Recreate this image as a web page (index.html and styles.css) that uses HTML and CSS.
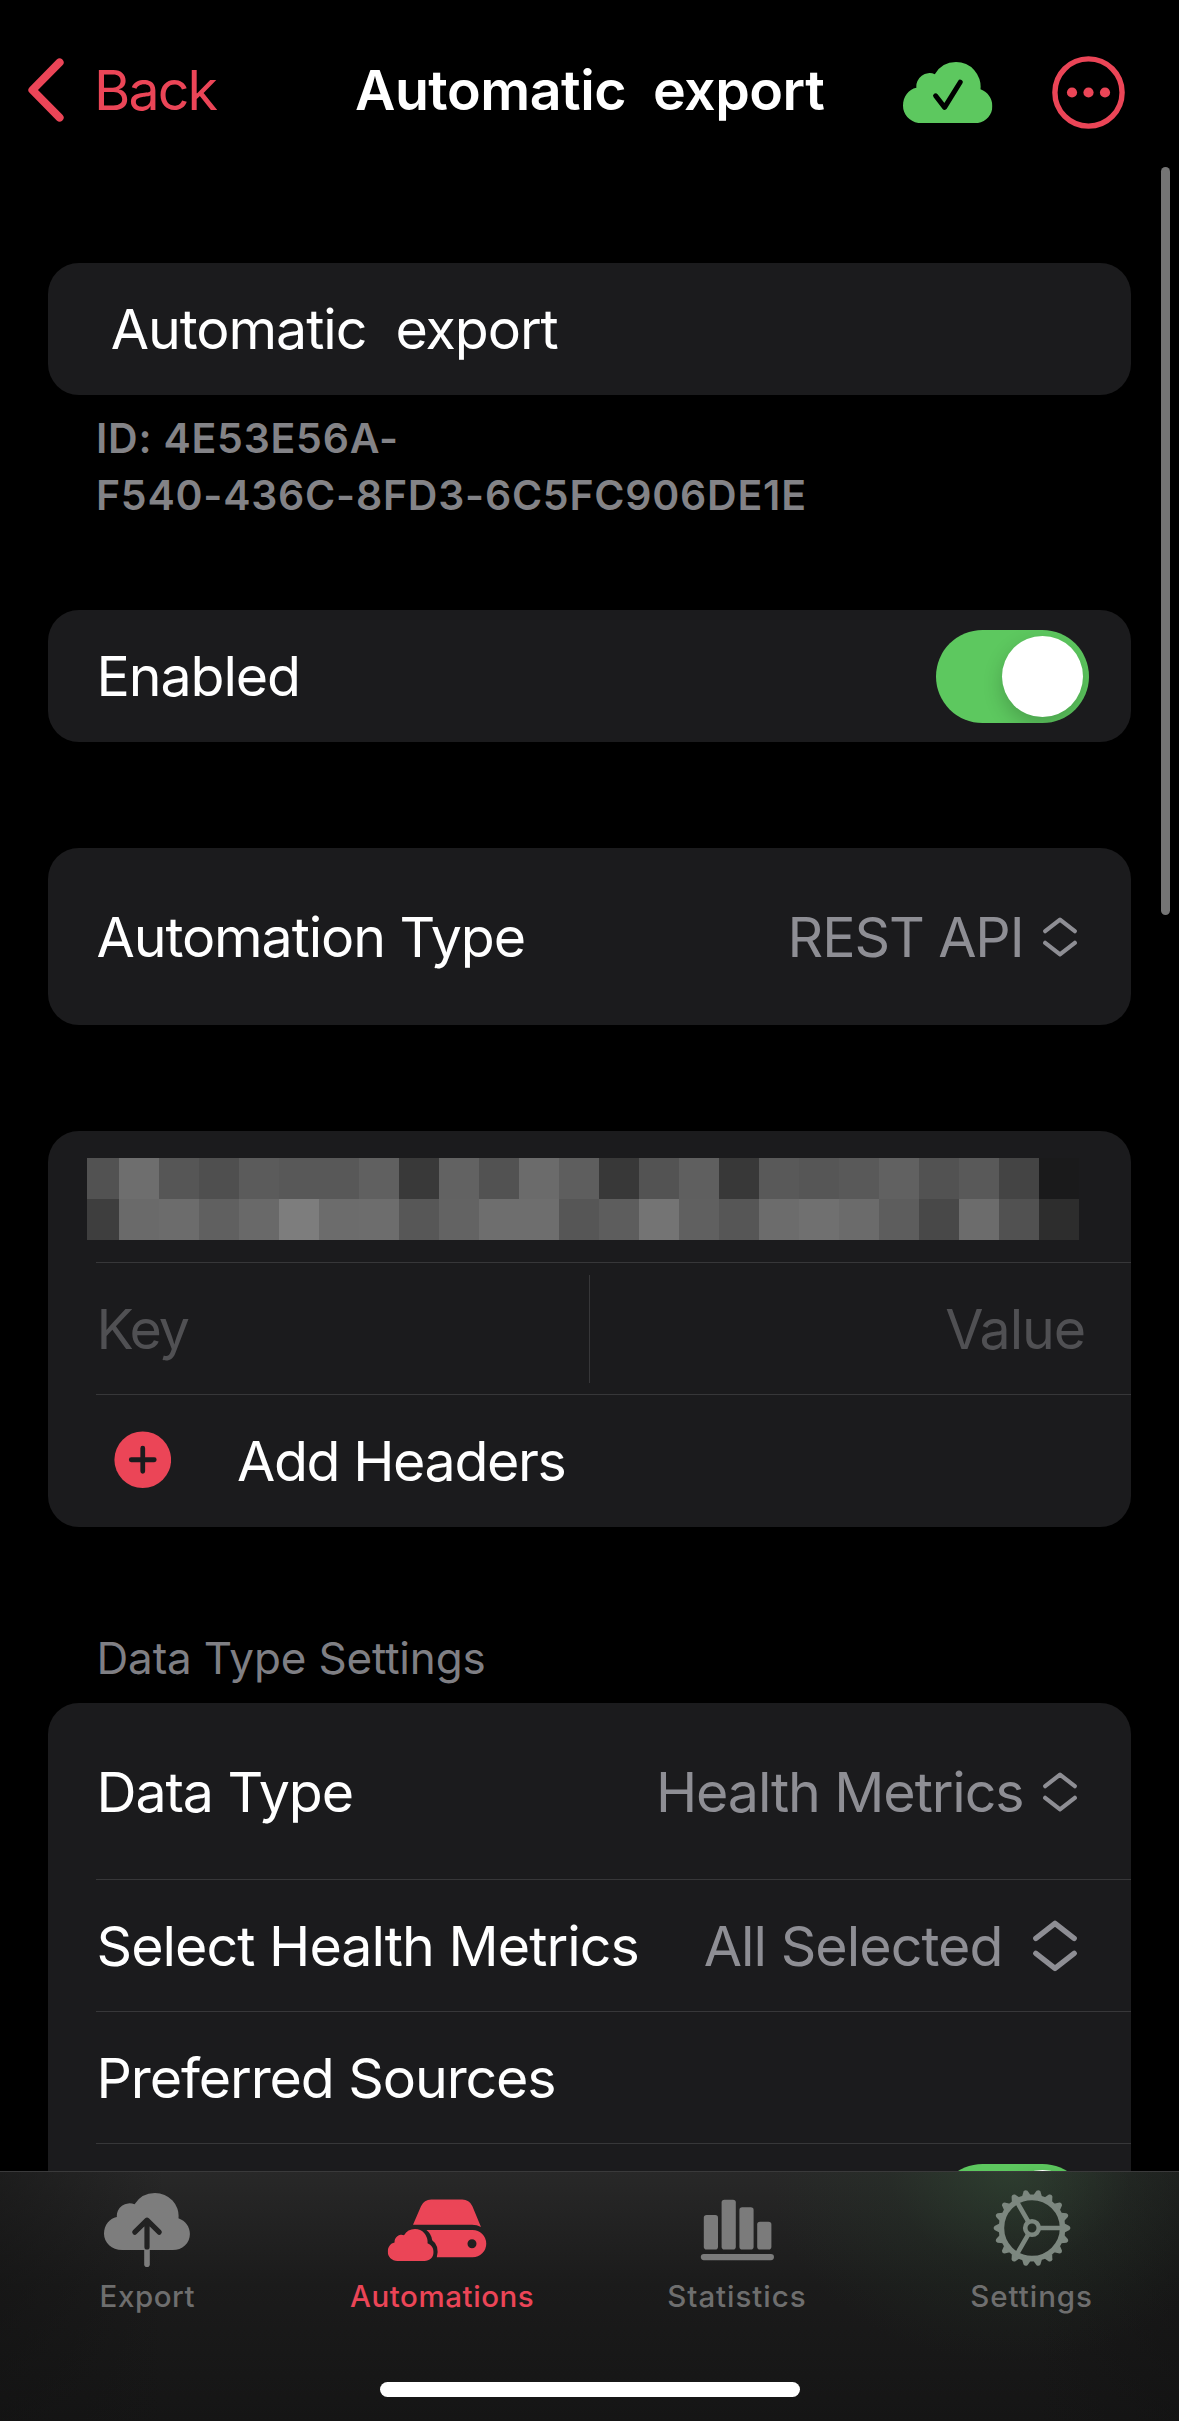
FILE: index.html
```html
<!DOCTYPE html>
<html lang="en">
<head>
<meta charset="utf-8">
<title>Automatic export</title>
<link rel="stylesheet" href="styles.css">
</head>
<body>
<svg class="defs" aria-hidden="true">
  <symbol id="cloud" viewBox="0 0 89.5 61.3" preserveAspectRatio="none">
    <path d="M19 61.3C8 61.3 0 53.5 0 43.8C0 34.5 5.5 27.2 13.4 25.7A13.2 13.2 0 0 1 31.8 12.2A24.6 24.6 0 0 1 53 0A24.6 24.6 0 0 1 77.5 27.2C85 30 89.4 36.6 89.4 44C89.4 54 81.5 61.3 71.5 61.3Z"/>
  </symbol>
  <symbol id="updown" viewBox="0 0 34 40">
    <path d="M2.2 14.2L17 2.6L31.8 14.2M2.2 25.8L17 37.4L31.8 25.8" fill="none" stroke="currentColor" stroke-width="4.2" stroke-linecap="round" stroke-linejoin="round"/>
  </symbol>
</svg>

<div class="screen">
  <header class="navbar">
    <a class="back">
      <svg class="back-icon" viewBox="0 0 36 64"><path d="M31.6 4.4L4.4 32L31.6 59.6" fill="none" stroke="currentColor" stroke-width="8" stroke-linecap="round" stroke-linejoin="round"/></svg>
      <span class="back-label">Back</span>
    </a>
    <h1 class="title">Automatic  export</h1>
    <div class="actions">
      <svg class="sync" viewBox="0 0 89.5 61.3"><use href="#cloud" width="89.5" height="61.3"/><path d="M32.6 33.8L41.6 45.4L57.2 20.2" fill="none" stroke="#000" stroke-width="5" stroke-linecap="round" stroke-linejoin="round"/></svg>
      <svg class="more" viewBox="0 0 73 73"><circle cx="36.5" cy="36.5" r="33.6" fill="none" stroke="currentColor" stroke-width="5.4"/><circle cx="20" cy="36.5" r="5.1" fill="currentColor"/><circle cx="36.5" cy="36.5" r="5.1" fill="currentColor"/><circle cx="53" cy="36.5" r="5.1" fill="currentColor"/></svg>
    </div>
  </header>

  <main class="form">
    <section class="card"><div class="row row-name">Automatic  export</div></section>
    <p class="footnote">ID: 4E53E56A-<br>F540-436C-8FD3-6C5FC906DE1E</p>

    <section class="card card-enabled">
      <div class="row row-toggle"><span>Enabled</span><span class="toggle"><i class="knob"></i></span></div>
    </section>

    <section class="card card-type">
      <div class="row tall"><span>Automation Type</span><span class="picker">REST API<svg class="updown"><use href="#updown"/></svg></span></div>
    </section>

    <section class="card card-headers">
      <div class="row row-url">
        <div class="mosaic">
          <i style="background:#525252"></i><i style="background:#6e6e6e"></i><i style="background:#565656"></i><i style="background:#4f4f4f"></i><i style="background:#5b5b5b"></i><i style="background:#585858"></i><i style="background:#585858"></i><i style="background:#606060"></i><i style="background:#393939"></i><i style="background:#626262"></i><i style="background:#525252"></i><i style="background:#6b6b6b"></i><i style="background:#5e5e5e"></i><i style="background:#383838"></i><i style="background:#535353"></i><i style="background:#5f5f5f"></i><i style="background:#383838"></i><i style="background:#595959"></i><i style="background:#565656"></i><i style="background:#595959"></i><i style="background:#616161"></i><i style="background:#525252"></i><i style="background:#595959"></i><i style="background:#444444"></i><i style="background:#1a1a1b"></i>
          <i style="background:#3e3e3e"></i><i style="background:#6a6a6a"></i><i style="background:#6c6c6c"></i><i style="background:#606060"></i><i style="background:#696969"></i><i style="background:#7d7d7d"></i><i style="background:#6c6c6c"></i><i style="background:#6d6d6d"></i><i style="background:#575757"></i><i style="background:#636363"></i><i style="background:#6e6e6e"></i><i style="background:#6e6e6e"></i><i style="background:#565656"></i><i style="background:#5d5d5d"></i><i style="background:#747474"></i><i style="background:#606060"></i><i style="background:#565656"></i><i style="background:#6c6c6c"></i><i style="background:#707070"></i><i style="background:#6b6b6b"></i><i style="background:#5d5d5d"></i><i style="background:#484848"></i><i style="background:#6c6c6c"></i><i style="background:#515151"></i><i style="background:#2d2d2d"></i>
        </div>
      </div>
      <div class="row row-pair"><span class="key">Key</span><span class="value">Value</span></div>
      <div class="row row-add">
        <svg class="plus" viewBox="0 0 58 58"><circle cx="29" cy="29" r="28.6" fill="#eb4557"/><path d="M29 17.4V40.6M17.4 29H40.6" stroke="#1b1b1d" stroke-width="4.8" stroke-linecap="round"/></svg>
        <span>Add Headers</span>
      </div>
    </section>

    <h2 class="section-title">Data Type Settings</h2>
    <section class="card card-data">
      <div class="row tall"><span>Data Type</span><span class="picker">Health Metrics<svg class="updown"><use href="#updown"/></svg></span></div>
      <div class="row row-metrics"><span>Select Health Metrics</span><span class="picker picker-wide">All Selected<svg class="updown updown-lg"><use href="#updown"/></svg></span></div>
      <div class="row">Preferred Sources</div>
      <div class="row row-toggle"><span></span><span class="toggle"><i class="knob"></i></span></div>
    </section>
  </main>

  <i class="scrollbar"></i>

  <footer class="tabbar">
    <nav class="tabs">
      <a class="tab">
        <svg class="tab-icon" viewBox="-60 0 120 84">
          <use href="#cloud" x="-43" y="4" width="86" height="57" fill="#7d7d7d"/>
          <path d="M0 60V75.2" stroke="#7d7d7d" stroke-width="5.6" stroke-linecap="round"/>
          <path d="M0 31.5V58M-12.2 43.2L0 31.2L12.2 43.2" fill="none" stroke="#222" stroke-width="5.2" stroke-linecap="round" stroke-linejoin="round"/>
        </svg>
        <span class="lbl-export">Export</span>
      </a>
      <a class="tab active">
        <svg class="tab-icon" viewBox="-60 0 120 84" fill="currentColor">
          <path d="M-29 35.7L-21 17.2Q-17.8 10.6 -10.8 10.6H20.2Q27.2 10.6 30.4 17.2L39 38Q35 35.7 30 35.7Z"/>
          <path fill-rule="evenodd" d="M-15.6 41H30.6A13.65 13.65 0 0 1 30.6 68.3H-5.2Q-2.2 56.5 -9.8 51.2Q-10.6 44.8 -15.6 41ZM30 50.2A4.5 4.5 0 1 0 30 59.2A4.5 4.5 0 1 0 30 50.2Z"/>
          <use href="#cloud" x="-54.3" y="40" width="46" height="32"/>
        </svg>
        <span class="lbl-auto">Automations</span>
      </a>
      <a class="tab">
        <svg class="tab-icon" viewBox="-60 0 120 84" fill="#7b7b7b">
          <rect x="-33.2" y="26" width="14.2" height="34.6" rx="2.8"/><rect x="-15.4" y="10.8" width="14.2" height="49.8" rx="2.8"/><rect x="2.4" y="18.2" width="14.2" height="42.4" rx="2.8"/><rect x="20.2" y="32.8" width="14.2" height="27.8" rx="2.8"/><rect x="-36.2" y="65" width="73.2" height="6.2" rx="3.1"/>
        </svg>
        <span class="lbl-stats">Statistics</span>
      </a>
      <a class="tab">
        <svg class="tab-icon" viewBox="-60 0 120 84">
          <g transform="translate(0 39)" fill="#7c877f" stroke="#7c877f">
            <g stroke="none">
              <path id="t" d="M-4.4 -32.6L-2 -37.4Q0 -39.4 2 -37.4L4.4 -32.6Z" transform="rotate(90)"/>
              <use href="#t" transform="rotate(20)"/><use href="#t" transform="rotate(40)"/><use href="#t" transform="rotate(60)"/><use href="#t" transform="rotate(80)"/><use href="#t" transform="rotate(100)"/><use href="#t" transform="rotate(120)"/><use href="#t" transform="rotate(140)"/><use href="#t" transform="rotate(160)"/><use href="#t" transform="rotate(180)"/><use href="#t" transform="rotate(200)"/><use href="#t" transform="rotate(220)"/><use href="#t" transform="rotate(240)"/><use href="#t" transform="rotate(260)"/><use href="#t" transform="rotate(280)"/><use href="#t" transform="rotate(300)"/><use href="#t" transform="rotate(320)"/><use href="#t" transform="rotate(340)"/>
            </g>
            <circle r="30.6" fill="none" stroke-width="5.6"/>
            <circle r="6.8" fill="none" stroke-width="4.6"/>
            <path d="M8 0H29M-4 -6.9L-14.5 -25.1M-4 6.9L-14.5 25.1" fill="none" stroke-width="4.6"/>
          </g>
        </svg>
        <span class="lbl-settings">Settings</span>
      </a>
    </nav>
    <i class="home"></i>
  </footer>
</div>
</body>
</html>
```
FILE: styles.css
```css
* { box-sizing: border-box; margin: 0; padding: 0; }

body {
  background: #000;
  color: #fff;
  font-family: Inter, "Liberation Sans", sans-serif;
  font-size: 55.5px;
  letter-spacing: -1.1px;
  line-height: 66px;
}

.defs { position: absolute; width: 0; height: 0; }

.screen {
  position: relative;
  height: 2421px;
  overflow: hidden;
}

/* Navigation bar */
.navbar {
  display: grid;
  grid-template-columns: 355px auto 1fr;
  align-items: center;
  height: 180px;
  padding: 0 54px 0 0;
}

.back {
  display: flex;
  align-items: center;
  gap: 30px;
  padding-left: 28px;
  color: #eb4557;
}
.back-icon { width: 36px; height: 64px; }
.back-label { letter-spacing: -1.9px; }

.title {
  font-size: 55.5px;
  font-weight: 600;
  letter-spacing: -0.5px;
  white-space: pre;
}

.actions {
  display: flex;
  justify-content: flex-end;
  align-items: center;
  gap: 59.5px;
  padding-top: 5px;
}
.sync { width: 89.5px; height: 61.3px; fill: #5dc85f; }
.more { width: 73px; height: 73px; color: #eb4557; }

/* Grouped form */
.form { padding: 83px 48px 0; }

.card {
  background: #1b1b1d;
  border-radius: 31px;
}
.card-enabled { margin-top: 86px; }
.card-type { margin-top: 106px; }
.card-headers { margin-top: 106px; }

.row {
  position: relative;
  display: flex;
  align-items: center;
  justify-content: space-between;
  height: 132px;
  padding: 0 54.5px 0 48.5px;
  white-space: pre;
}
.tall { height: 177px; }
.row + .row::before {
  content: "";
  position: absolute;
  top: -1px;
  left: 48px;
  right: 0;
  height: 1px;
  background: #373739;
}
.row-name { padding-left: 62.7px; letter-spacing: -1.05px; }
.row-toggle { padding-right: 42px; }
.row-metrics { letter-spacing: -0.95px; }

.footnote {
  height: 129px;
  padding: 15px 0 0 48px;
  color: #838387;
  font-size: 41px;
  font-weight: 600;
  letter-spacing: 0.77px;
  line-height: 57px;
}

.toggle {
  display: flex;
  justify-content: flex-end;
  width: 153px;
  height: 93px;
  padding: 6px;
  border-radius: 47px;
  background: #5dc85f;
  overflow: hidden;
}
.knob {
  width: 81px;
  height: 81px;
  border-radius: 50%;
  background: #fff;
  box-shadow: 0 8px 20px rgba(0, 0, 0, 0.2);
}

.picker {
  display: flex;
  align-items: center;
  gap: 19px;
  color: #8e8e94;
}
.picker-wide { gap: 30px; }
.updown { width: 34px; height: 40px; }
.updown-lg { width: 44px; height: 51.8px; }

.row-url { padding: 0 0 0 39px; align-items: flex-start; }
.mosaic {
  display: grid;
  grid-template-columns: 32px repeat(24, 40px);
  grid-auto-rows: 41px;
  margin-top: 27px;
}

.row-pair { padding-right: 46px; color: #505053; }
.row-pair .key {
  display: flex;
  align-items: center;
  width: 493.5px;
  height: 108px;
  border-right: 1px solid #373739;
  letter-spacing: -2px;
}

.row-add { justify-content: flex-start; gap: 66px; padding-left: 65.5px; letter-spacing: -1.4px; }
.plus { width: 57.5px; height: 57.5px; margin-bottom: 2px; }

.section-title {
  margin-top: 105px;
  padding-left: 48.5px;
  height: 71px;
  color: #7f7f84;
  font-size: 44px;
  font-weight: 400;
  letter-spacing: -0.16px;
  line-height: 53px;
}
.card-data { border-radius: 31px 31px 0 0; }

.scrollbar {
  position: absolute;
  top: 167px;
  right: 9px;
  width: 9px;
  height: 748px;
  border-radius: 4.5px;
  background: #757575;
}

/* Tab bar, laid over the scrolled form */
.tabbar {
  position: absolute;
  left: 0;
  right: 0;
  bottom: 0;
  height: 250px;
  border-top: 1px solid #3a3a3b;
  background:
    radial-gradient(ellipse 240px 190px at 1010px 0, rgba(52, 86, 56, 0.45), rgba(40, 66, 44, 0.18) 50%, rgba(30, 50, 32, 0) 100%),
    linear-gradient(90deg, rgba(18, 18, 18, 0.5), rgba(18, 18, 18, 0) 14%, rgba(18, 18, 18, 0) 88%, rgba(18, 18, 18, 0.5)),
    linear-gradient(#282828, #1b1b1b 45%, #151515);
  display: flex;
  flex-direction: column;
  align-items: center;
}
.tabs {
  display: grid;
  grid-template-columns: repeat(4, 1fr);
  width: 100%;
  height: 210px;
  padding-top: 17px;
}
.tab {
  display: flex;
  flex-direction: column;
  align-items: center;
  gap: 5px;
  color: #6e6e6e;
  font-size: 29.5px;
  font-weight: 500;
  letter-spacing: 0.57px;
  line-height: 36px;
}
.active { color: #eb4557; }
.tab-icon { width: 120px; height: 84px; }
.lbl-stats, .lbl-settings { letter-spacing: 0.95px; }
.home {
  width: 420px;
  height: 15px;
  border-radius: 7.5px;
  background: #fff;
}
```
